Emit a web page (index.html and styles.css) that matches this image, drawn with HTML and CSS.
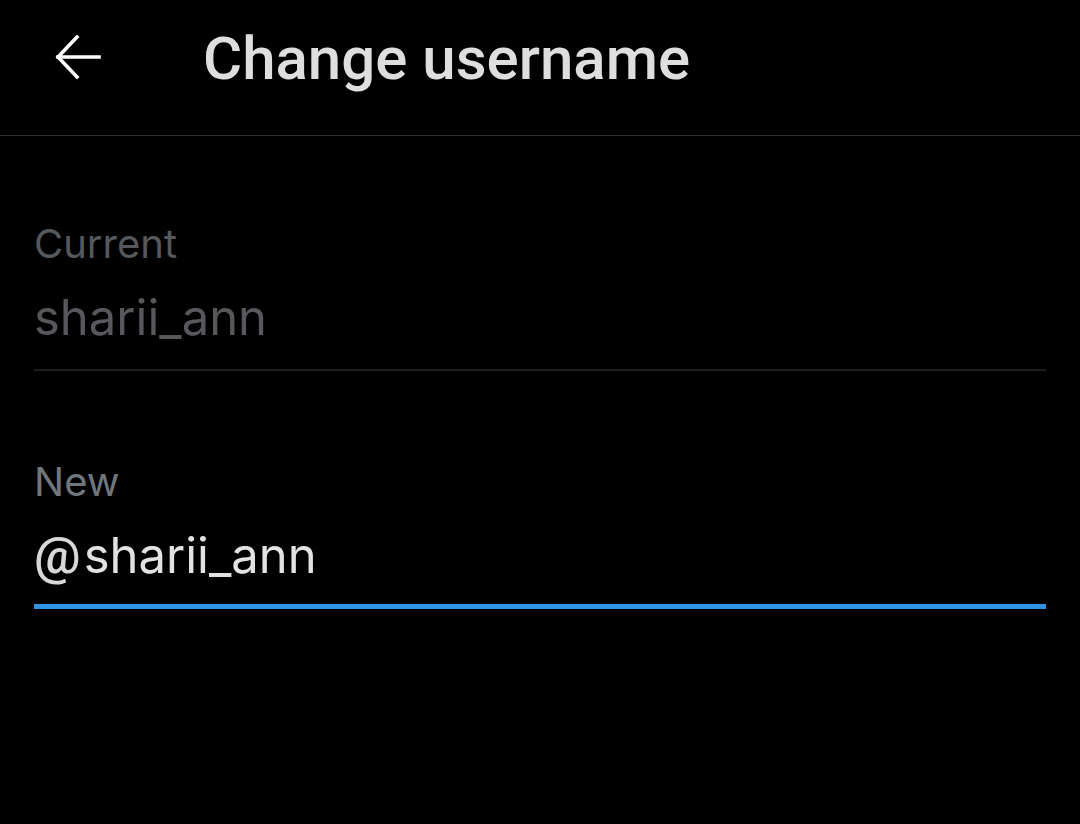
FILE: index.html
```html
<!DOCTYPE html>
<html lang="en">
<head>
<meta charset="utf-8">
<title>Change username</title>
<link rel="stylesheet" href="styles.css">
</head>
<body>
<header class="topbar">
  <button class="back" aria-label="Back">
    <svg viewBox="0 0 46 46" width="46" height="46" fill="none" stroke="#ffffff" stroke-width="3.6" stroke-linecap="square">
      <path d="M44 22H3"/>
      <path d="M22 2L3 22L22 42"/>
    </svg>
  </button>
  <h1 class="title">Change username</h1>
</header>
<main class="form">
  <div class="field current">
    <div class="label">Current</div>
    <div class="value">sharii_ann</div>
  </div>
  <div class="field new">
    <div class="label">New</div>
    <div class="value"><span class="at">@</span>sharii_ann</div>
  </div>
</main>
</body>
</html>
```
FILE: styles.css
```css
html, body {
  margin: 0;
  padding: 0;
  background: #000;
  height: 100%;
}
body {
  font-family: Inter, "Noto Sans", sans-serif;
  color: #e0e0e0;
}
.topbar {
  height: 135px;
  border-bottom: 1px solid #2f3036;
  display: flex;
  align-items: center;
  padding-left: 55px;
  box-sizing: content-box;
}
.back {
  background: none;
  border: 0;
  padding: 0;
  width: 46px;
  height: 46px;
  margin-top: -20px;
  display: flex;
}
.title {
  margin: 0 0 0 102px;
  margin-top: -18px;
  font-family: Roboto, sans-serif;
  font-weight: 500;
  font-size: 60px;
  color: #dedede;
  letter-spacing: 0;
}
.form {
  padding: 0 34px;
}
.field {
  display: flex;
  flex-direction: column;
}
.current {
  margin-top: 82px;
}
.label {
  font-size: 40px;
  line-height: 52px;
}
.current .label {
  color: #55585c;
}
.value {
  font-size: 49px;
  line-height: 60px;
}
.current .value {
  color: #56585c;
  padding-top: 18px;
  padding-bottom: 21px;
  border-bottom: 2px solid #1d1e23;
}
.new {
  margin-top: 85px;
}
.new .label {
  color: #71767b;
}
.new .value {
  color: #e2e2e2;
  padding-top: 18px;
  padding-bottom: 18px;
  border-bottom: 5px solid #2e93e0;
}
.at {
  font-family: Roboto, sans-serif;
  font-weight: 500;
  font-size: 52px;
  color: #d8d8d8;
  margin-right: 3px;
}
```
